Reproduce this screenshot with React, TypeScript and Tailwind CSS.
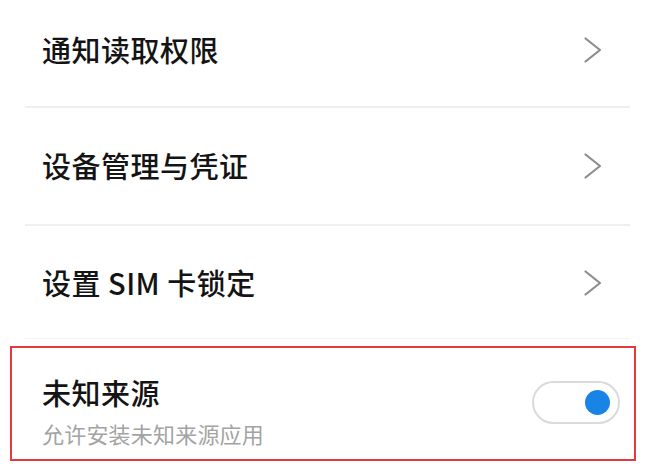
import React from 'react';

function Chevron() {
  return (
    <svg width="20" height="28" viewBox="0 0 20 28" fill="none">
      <polyline points="2.5,2.5 17,14 2.5,25.5" stroke="#8c8c8c" strokeWidth="2.2" strokeLinecap="round" strokeLinejoin="round" />
    </svg>
  );
}

function NavRow({ label, height }: { label: string; height: string }) {
  return (
    <div className={`flex items-center justify-between pl-[42px] pr-[47px] ${height}`}>
      <span className="text-[29px] font-medium text-[#141414] tracking-[0.5px]">{label}</span>
      <Chevron />
    </div>
  );
}

function Divider() {
  return <div className="ml-[25px] mr-[20px] h-[2px] bg-[#efefef]" />;
}

export default function App() {
  return (
    <div
      className="w-[650px] h-[470px] bg-white overflow-hidden"
      style={{ fontFamily: '"Noto Sans CJK SC", "Noto Sans", sans-serif' }}
    >
      <NavRow label="通知读取权限" height="h-[106px] pb-[6px]" />
      <Divider />
      <NavRow label="设备管理与凭证" height="h-[116px]" />
      <Divider />
      <NavRow label="设置 SIM 卡锁定" height="h-[112px] pt-[2px]" />
      <div className="ml-[25px] mr-[20px] h-px bg-[#f4f4f4]" />

      <div className="mt-[7px] ml-[10px] w-[626px] h-[115px] border-[2.5px] border-[#e23a3f] flex items-start justify-between pl-[30px] pr-[14px]">
        <div className="flex flex-col pt-[26px]">
          <span className="text-[29px] font-medium text-[#141414] leading-[36px] tracking-[0.5px]">未知来源</span>
          <span className="text-[22px] text-[#a3a3a3] leading-[28px] mt-[9px] tracking-[0.2px]">允许安装未知来源应用</span>
        </div>
        <div className="self-center mt-[-2px] w-[88px] h-[43px] rounded-full border-2 border-[#dadada] bg-white flex items-center justify-end pr-[8px]">
          <div className="w-[25px] h-[25px] rounded-full bg-[#1a84e6]" />
        </div>
      </div>
    </div>
  );
}
